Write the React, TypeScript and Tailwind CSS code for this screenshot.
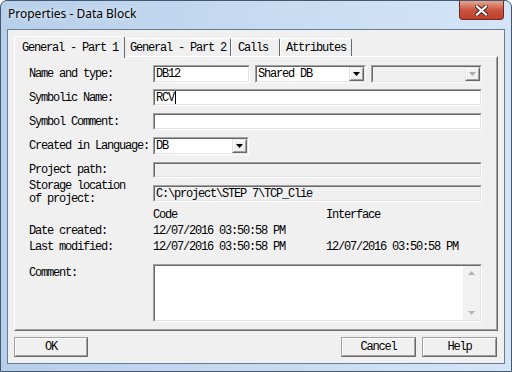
import type { ReactNode } from 'react';

const mono = "font-['Liberation_Mono',monospace] text-[12px] tracking-[-1.2px] text-black whitespace-pre";

function Sunken({ className = '', disabled = false, children }: { className?: string; disabled?: boolean; children?: ReactNode }) {
  return (
    <div className={`border border-t-[#a0a0a0] border-l-[#a0a0a0] border-r-white border-b-white ${className}`}>
      <div
        className={`flex h-full w-full items-center border border-t-[#696969] border-l-[#696969] border-r-[#e3e3e3] border-b-[#e3e3e3] ${
          disabled ? 'bg-[#f0f0f0]' : 'bg-white'
        }`}
      >
        {children}
      </div>
    </div>
  );
}

function DropBtn({ disabled = false }: { disabled?: boolean }) {
  return (
    <div className="h-full w-[15px] shrink-0 border border-t-[#e3e3e3] border-l-[#e3e3e3] border-r-[#696969] border-b-[#696969] bg-[#f0f0f0]">
      <div className="flex h-full w-full items-center justify-center border border-t-white border-l-white border-r-[#a0a0a0] border-b-[#a0a0a0]">
        <svg width="7" height="4" viewBox="0 0 7 4">
          <path d="M0 0h7L3.5 4z" fill={disabled ? '#a8a8a8' : '#000'} />
        </svg>
      </div>
    </div>
  );
}

function Select({ className = '', value = '', disabled = false }: { className?: string; value?: string; disabled?: boolean }) {
  return (
    <Sunken className={className} disabled={disabled}>
      <span className={`${mono} flex-1 pl-[1px]`}>{value}</span>
      <DropBtn disabled={disabled} />
    </Sunken>
  );
}

function Button({ label, className = '' }: { label: string; className?: string }) {
  return (
    <div className={`h-[20px] border border-t-[#a0a0a0] border-l-[#a0a0a0] border-r-[#696969] border-b-[#696969] bg-[#f0f0f0] ${className}`}>
      <div className="flex h-full w-full items-center justify-center border border-t-white border-l-white border-r-[#a0a0a0] border-b-[#a0a0a0]">
        <span className={mono}>{label}</span>
      </div>
    </div>
  );
}

function Label({ children }: { children: ReactNode }) {
  return <div className={`${mono} w-[124px] shrink-0`}>{children}</div>;
}

export default function App() {
  return (
    <div className="flex h-[372px] w-[512px] flex-col overflow-hidden rounded-t-[7px] border border-[#44576f] bg-gradient-to-r from-[#b6cfea] via-[#c6dbf1] to-[#d4e5f7]">
      {/* title bar */}
      <div className="flex h-[28px] shrink-0 items-start justify-between">
        <div className="pl-[7px] pt-[4px] font-['Noto_Sans',sans-serif] text-[12px] text-black [text-shadow:0_0_6px_#ffffff]">
          Properties - Data Block
        </div>
        <div className="mr-[7px] flex h-[19px] w-[45px] items-center justify-center rounded-b-[4px] border border-t-0 border-[#6b2a22] bg-gradient-to-b from-[#e6a494] via-[#c9543f] to-[#c23d2b]">
          <svg width="13" height="11" viewBox="0 0 13 11">
            <path d="M2 1.5l9 8M11 1.5l-9 8" stroke="#4a2420" strokeWidth="4" strokeLinecap="square" />
            <path d="M2 1.5l9 8M11 1.5l-9 8" stroke="#ffffff" strokeWidth="2.2" strokeLinecap="square" />
          </svg>
        </div>
      </div>

      {/* client area */}
      <div className="mx-[6px] mb-[7px] flex flex-1 flex-col border border-[#6a7b92] bg-[#f0f0f0] px-[6px] pt-[6px]">
        {/* tabs */}
        <div className="flex h-[20px] shrink-0 items-end">
          <div className="relative z-10 -mb-[2px] flex h-[22px] w-[111px] items-start rounded-t-[2px] border-t border-l border-t-white border-l-white border-r border-r-[#696969] bg-[#f0f0f0] pl-[7px] pt-[2px]">
            <span className={mono}>General - Part 1</span>
          </div>
          <div className="flex h-[18px] w-[106px] items-center rounded-t-[2px] border-t border-t-white border-r border-r-[#696969] pl-[5px]">
            <span className={mono}>General - Part 2</span>
          </div>
          <div className="flex h-[18px] w-[49px] items-center rounded-t-[2px] border-t border-l border-t-white border-l-white border-r border-r-[#696969] pl-[6px]">
            <span className={mono}>Calls</span>
          </div>
          <div className="flex h-[18px] w-[72px] items-center rounded-t-[2px] border-t border-l border-t-white border-l-white border-r border-r-[#696969] pl-[5px]">
            <span className={mono}>Attributes</span>
          </div>
        </div>

        {/* panel */}
        <div className="h-[275px] shrink-0 border border-t-white border-l-white border-r-[#696969] border-b-[#696969]">
          <div className="flex h-full w-full flex-col border border-t-[#f0f0f0] border-l-[#f0f0f0] border-r-[#a0a0a0] border-b-[#a0a0a0] pl-[13px] pr-[14px] pt-[7px]">
            <div className="flex h-[18px] items-center">
              <Label>Name and type:</Label>
              <Sunken className="h-full w-[97px]">
                <span className={`${mono} pl-[1px]`}>DB12</span>
              </Sunken>
              <Select className="ml-[5px] h-full w-[111px]" value="Shared DB" />
              <Select className="ml-[5px] h-full flex-1" disabled />
            </div>

            <div className="mt-[6px] flex h-[17px] items-center">
              <Label>Symbolic Name:</Label>
              <Sunken className="h-full flex-1">
                <span className={`${mono} pl-[1px]`}>RCV</span>
                <span className="ml-[1px] h-[13px] w-[1px] bg-black" />
              </Sunken>
            </div>

            <div className="mt-[7px] flex h-[17px] items-center">
              <Label>Symbol Comment:</Label>
              <Sunken className="h-full flex-1" />
            </div>

            <div className="mt-[7px] flex h-[18px] items-center">
              <Label>Created in Language:</Label>
              <Select className="h-full w-[96px]" value="DB" />
            </div>

            <div className="mt-[7px] flex h-[16px] items-center">
              <Label>Project path:</Label>
              <Sunken className="h-full flex-1" disabled />
            </div>

            <div className="mt-[7px] flex h-[17px] items-center">
              <div className="mb-[2px] flex w-[124px] shrink-0 flex-col">
                <div className={`${mono} leading-[13px]`}>Storage location</div>
                <div className={`${mono} leading-[13px]`}>of project:</div>
              </div>
              <Sunken className="h-full flex-1" disabled>
                <span className={`${mono} pl-[1px]`}>C:\project\STEP 7\TCP_Clie</span>
              </Sunken>
            </div>

            <div className="mt-[5px] flex h-[16px] items-center">
              <div className="w-[124px] shrink-0" />
              <div className={`${mono} w-[173px] shrink-0`}>Code</div>
              <div className={mono}>Interface</div>
            </div>
            <div className="flex h-[16px] items-center">
              <Label>Date created:</Label>
              <div className={`${mono} w-[173px] shrink-0`}>12/07/2016 03:50:58 PM</div>
            </div>
            <div className="flex h-[16px] items-center">
              <Label>Last modified:</Label>
              <div className={`${mono} w-[173px] shrink-0`}>12/07/2016 03:50:58 PM</div>
              <div className={mono}>12/07/2016 03:50:58 PM</div>
            </div>

            <div className="mt-[9px] flex h-[58px] items-start">
              <div className={`${mono} w-[124px] shrink-0`}>Comment:</div>
              <div className="h-full flex-1 border border-t-[#a0a0a0] border-l-[#a0a0a0] border-r-white border-b-white">
                <div className="flex h-full w-full border border-t-[#696969] border-l-[#696969] border-r-[#e3e3e3] border-b-[#e3e3e3] bg-white">
                  <div className="flex-1" />
                  <div className="flex w-[17px] flex-col items-center justify-between bg-[#f1f1f1] py-[5px]">
                    <svg width="7" height="4" viewBox="0 0 7 4">
                      <path d="M0 4h7L3.5 0z" fill="#b4b4b4" />
                    </svg>
                    <svg width="7" height="4" viewBox="0 0 7 4">
                      <path d="M0 0h7L3.5 4z" fill="#b4b4b4" />
                    </svg>
                  </div>
                </div>
              </div>
            </div>
          </div>
        </div>

        {/* buttons */}
        <div className="mt-[6px] flex pr-[1px]">
          <Button label="OK" className="w-[74px]" />
          <div className="flex-1" />
          <Button label="Cancel" className="w-[75px]" />
          <Button label="Help" className="ml-[6px] w-[75px]" />
        </div>
      </div>
    </div>
  );
}
